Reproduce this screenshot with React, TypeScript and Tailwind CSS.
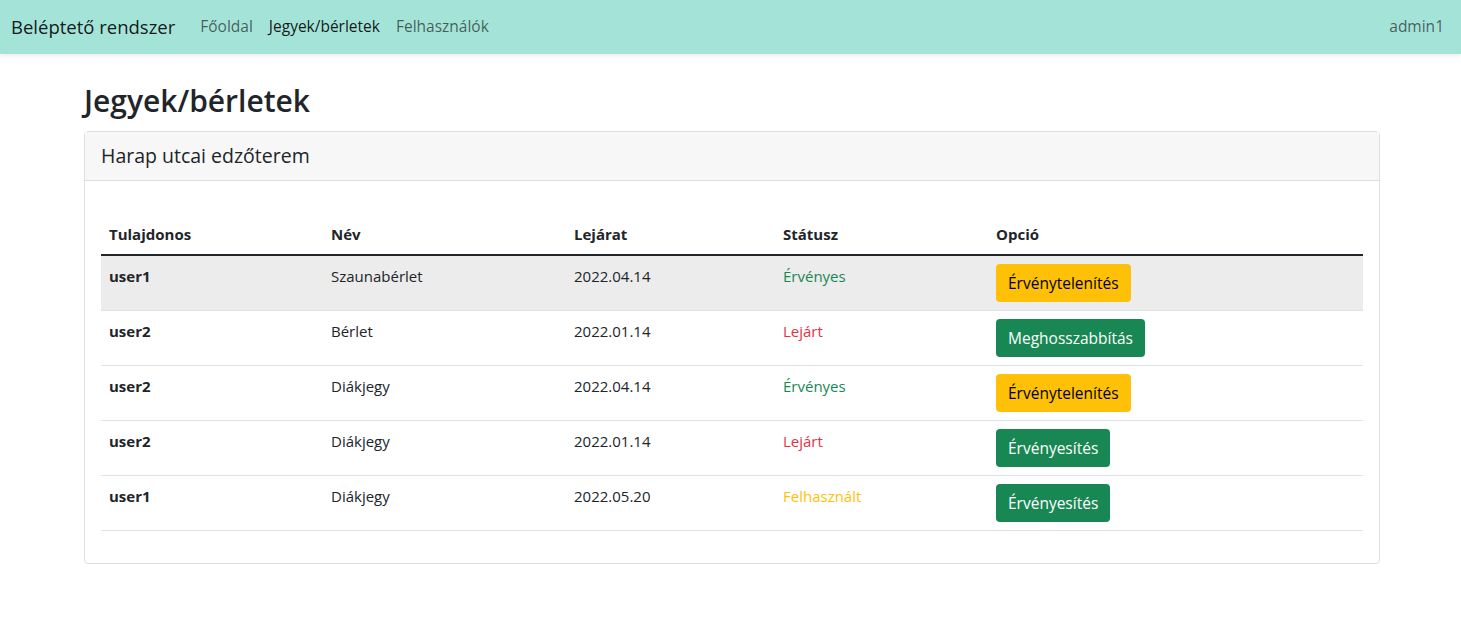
import React from "react";

const rows = [
  { owner: "user1", name: "Szaunabérlet", exp: "2022.04.14", status: "Érvényes", sc: "text-[#198754]", btn: "Érvénytelenítés", bc: "bg-[#ffc107] text-black", active: true },
  { owner: "user2", name: "Bérlet", exp: "2022.01.14", status: "Lejárt", sc: "text-[#dc3545]", btn: "Meghosszabbítás", bc: "bg-[#198754] text-white", active: false },
  { owner: "user2", name: "Diákjegy", exp: "2022.04.14", status: "Érvényes", sc: "text-[#198754]", btn: "Érvénytelenítés", bc: "bg-[#ffc107] text-black", active: false },
  { owner: "user2", name: "Diákjegy", exp: "2022.01.14", status: "Lejárt", sc: "text-[#dc3545]", btn: "Érvényesítés", bc: "bg-[#198754] text-white", active: false },
  { owner: "user1", name: "Diákjegy", exp: "2022.05.20", status: "Felhasznált", sc: "text-[#ffc107]", btn: "Érvényesítés", bc: "bg-[#198754] text-white", active: false },
];

export default function App() {
  return (
    <div className="min-h-[622px] bg-white text-[#212529] text-[16px] font-['Open_Sans',sans-serif]">
      <nav className="h-[54px] bg-[#a4e4d8] flex items-center pl-[11px] pr-[17px] shadow-[0_2px_4px_rgba(0,0,0,0.08)] relative">
        <span className="text-[18.5px] text-black/90 mr-[25px]">Beléptető rendszer</span>
        <div className="flex gap-[16px] text-[15.5px]">
          <span className="text-black/60">Főoldal</span>
          <span className="text-black/90">Jegyek/bérletek</span>
          <span className="text-black/60">Felhasználók</span>
        </div>
        <span className="ml-auto text-[15.5px] text-black/60">admin1</span>
      </nav>
      <div className="w-[1296px] ml-[84px] pt-[29px]">
        <h2 className="text-[30px] font-semibold leading-[1.2] mb-[12px] text-[#212529]">Jegyek/bérletek</h2>
        <div className="border border-[#dfdfdf] rounded-[4px]">
          <div className="bg-[#f7f7f7] border-b border-[#dfdfdf] h-[49px] flex items-center px-[16px] text-[19.5px]">
            Harap utcai edzőterem
          </div>
          <div className="px-[16px] pt-[33px] pb-[16px]">
            <table className="w-full border-collapse mb-[16px]">
              <thead>
                <tr className="border-b-2 border-[#212529]">
                  <th className="w-[222px] text-left font-bold px-[8px] py-[8px] leading-[24px] text-[15px]">Tulajdonos</th>
                  <th className="w-[243px] text-left font-bold px-[8px] py-[8px] leading-[24px] text-[15px]">Név</th>
                  <th className="w-[209px] text-left font-bold px-[8px] py-[8px] leading-[24px] text-[15px]">Lejárat</th>
                  <th className="w-[213px] text-left font-bold px-[8px] py-[8px] leading-[24px] text-[15px]">Státusz</th>
                  <th className="text-left font-bold px-[8px] py-[8px] leading-[24px] text-[15px]">Opció</th>
                </tr>
              </thead>
              <tbody>
                {rows.map((r, i) => (
                  <tr key={i} className={"border-b border-[#dee2e6] " + (r.active ? "bg-[#ececec]" : "")}>
                    <td className="align-top px-[8px] py-[8px] leading-[24px] text-[15px] font-bold">{r.owner}</td>
                    <td className="align-top px-[8px] py-[8px] leading-[24px] text-[15px]">{r.name}</td>
                    <td className="align-top px-[8px] py-[8px] leading-[24px] text-[15px]">{r.exp}</td>
                    <td className={"align-top px-[8px] py-[8px] leading-[24px] text-[15px] " + r.sc}>{r.status}</td>
                    <td className="align-top px-[8px] py-[8px]">
                      <span className={"inline-block h-[38px] leading-[38px] px-[12px] rounded-[4px] text-[15.5px] " + r.bc}>{r.btn}</span>
                    </td>
                  </tr>
                ))}
              </tbody>
            </table>
          </div>
        </div>
      </div>
    </div>
  );
}
